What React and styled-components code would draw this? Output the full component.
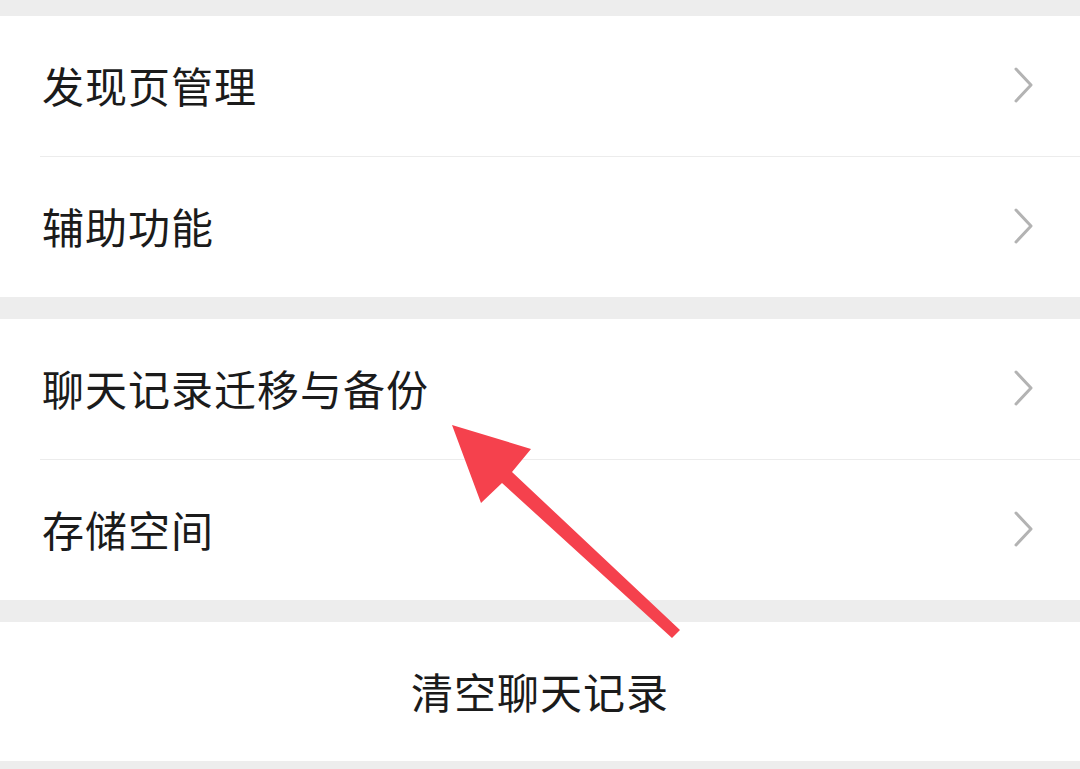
import React from "react";
import styled, { createGlobalStyle } from "styled-components";

const Global = createGlobalStyle`
  html, body {
    margin: 0;
    padding: 0;
    background: #ededed;
  }
  body {
    font-family: "Noto Sans CJK SC", "Noto Sans", sans-serif;
  }
`;

const Page = styled.div`
  position: relative;
  width: 1080px;
  height: 769px;
  overflow: hidden;
  background: #ededed;
  padding-top: 16px;
  box-sizing: border-box;
  display: flex;
  flex-direction: column;
  gap: 22px;
`;

const Group = styled.div`
  background: #ffffff;
  display: flex;
  flex-direction: column;
`;

const Row = styled.div`
  height: ${(p) => p.h || 140}px;
  display: flex;
  align-items: center;
  justify-content: ${(p) => (p.center ? "center" : "space-between")};
  padding: ${(p) => (p.center ? "0 0 2px" : "0 46px 2px 42px")};
  box-sizing: border-box;
`;

const Label = styled.span`
  font-size: 42px;
  color: #1b1b1b;
  letter-spacing: 1px;
  line-height: 1;
`;

const Line = styled.div`
  height: 1px;
  margin-left: 40px;
  background: #ececec;
`;

const Chevron = () => (
  <svg width="20" height="36" viewBox="0 0 20 36">
    <path
      d="M2 2 L17 18 L2 34"
      fill="none"
      stroke="#b3b3b3"
      strokeWidth="3"
      strokeLinecap="round"
      strokeLinejoin="round"
    />
  </svg>
);

const ArrowLayer = styled.svg`
  position: absolute;
  left: 0;
  top: 0;
  pointer-events: none;
`;

const Item = ({ label }) => (
  <Row>
    <Label>{label}</Label>
    <Chevron />
  </Row>
);

export default function App() {
  return (
    <>
      <Global />
      <Page>
        <Group>
          <Item label="发现页管理" />
          <Line />
          <Item label="辅助功能" />
        </Group>
        <Group>
          <Item label="聊天记录迁移与备份" />
          <Line />
          <Item label="存储空间" />
        </Group>
        <Group>
          <Row center h={139}>
            <Label>清空聊天记录</Label>
          </Row>
        </Group>
        <ArrowLayer width="1080" height="769" viewBox="0 0 1080 769">
          <polygon
            points="452,425 531,449 512,472 680,630 672,638 502,483 481,503"
            fill="#f5414d"
          />
        </ArrowLayer>
      </Page>
    </>
  );
}
